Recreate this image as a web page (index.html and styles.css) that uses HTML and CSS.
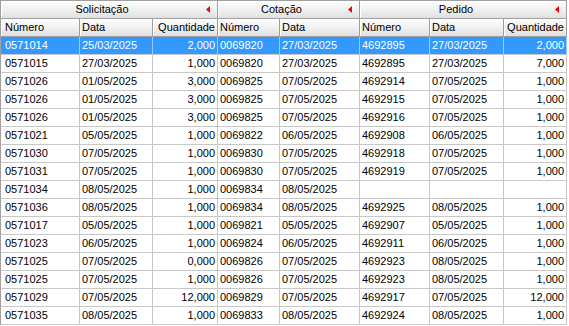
FILE: index.html
```html
<!DOCTYPE html>
<html lang="pt-BR">
<head>
<meta charset="utf-8">
<title>Grade</title>
<link rel="stylesheet" href="styles.css">
</head>
<body>
<div class="grid">
  <div class="h g">Solicitação<svg class="arrow" width="4" height="7" viewBox="0 0 4 7"><polygon points="4,0 0,3.5 4,7" fill="#f00"/></svg></div>
  <div class="h g g2">Cotação<svg class="arrow" width="4" height="7" viewBox="0 0 4 7"><polygon points="4,0 0,3.5 4,7" fill="#f00"/></svg></div>
  <div class="h g">Pedido<svg class="arrow" width="4" height="7" viewBox="0 0 4 7"><polygon points="4,0 0,3.5 4,7" fill="#f00"/></svg></div>

  <div class="h c first">Número</div><div class="h c">Data</div><div class="h c num">Quantidade</div><div class="h c">Número</div><div class="h c">Data</div><div class="h c">Número</div><div class="h c">Data</div><div class="h c num">Quantidade</div>

  <div class="row sel"><div class="c first">0571014</div><div class="c">25/03/2025</div><div class="c num">2,000</div><div class="c">0069820</div><div class="c">27/03/2025</div><div class="c">4692895</div><div class="c">27/03/2025</div><div class="c num">2,000</div></div>
  <div class="row"><div class="c first">0571015</div><div class="c">27/03/2025</div><div class="c num">1,000</div><div class="c">0069820</div><div class="c">27/03/2025</div><div class="c">4692895</div><div class="c">27/03/2025</div><div class="c num">7,000</div></div>
  <div class="row"><div class="c first">0571026</div><div class="c">01/05/2025</div><div class="c num">3,000</div><div class="c">0069825</div><div class="c">07/05/2025</div><div class="c">4692914</div><div class="c">07/05/2025</div><div class="c num">1,000</div></div>
  <div class="row"><div class="c first">0571026</div><div class="c">01/05/2025</div><div class="c num">3,000</div><div class="c">0069825</div><div class="c">07/05/2025</div><div class="c">4692915</div><div class="c">07/05/2025</div><div class="c num">1,000</div></div>
  <div class="row"><div class="c first">0571026</div><div class="c">01/05/2025</div><div class="c num">3,000</div><div class="c">0069825</div><div class="c">07/05/2025</div><div class="c">4692916</div><div class="c">07/05/2025</div><div class="c num">1,000</div></div>
  <div class="row"><div class="c first">0571021</div><div class="c">05/05/2025</div><div class="c num">1,000</div><div class="c">0069822</div><div class="c">06/05/2025</div><div class="c">4692908</div><div class="c">06/05/2025</div><div class="c num">1,000</div></div>
  <div class="row"><div class="c first">0571030</div><div class="c">07/05/2025</div><div class="c num">1,000</div><div class="c">0069830</div><div class="c">07/05/2025</div><div class="c">4692918</div><div class="c">07/05/2025</div><div class="c num">1,000</div></div>
  <div class="row"><div class="c first">0571031</div><div class="c">07/05/2025</div><div class="c num">1,000</div><div class="c">0069830</div><div class="c">07/05/2025</div><div class="c">4692919</div><div class="c">07/05/2025</div><div class="c num">1,000</div></div>
  <div class="row"><div class="c first">0571034</div><div class="c">08/05/2025</div><div class="c num">1,000</div><div class="c">0069834</div><div class="c">08/05/2025</div><div class="c"></div><div class="c"></div><div class="c num"></div></div>
  <div class="row"><div class="c first">0571036</div><div class="c">08/05/2025</div><div class="c num">1,000</div><div class="c">0069834</div><div class="c">08/05/2025</div><div class="c">4692925</div><div class="c">08/05/2025</div><div class="c num">1,000</div></div>
  <div class="row"><div class="c first">0571017</div><div class="c">05/05/2025</div><div class="c num">1,000</div><div class="c">0069821</div><div class="c">05/05/2025</div><div class="c">4692907</div><div class="c">05/05/2025</div><div class="c num">1,000</div></div>
  <div class="row"><div class="c first">0571023</div><div class="c">06/05/2025</div><div class="c num">1,000</div><div class="c">0069824</div><div class="c">06/05/2025</div><div class="c">4692911</div><div class="c">06/05/2025</div><div class="c num">1,000</div></div>
  <div class="row"><div class="c first">0571025</div><div class="c">07/05/2025</div><div class="c num">0,000</div><div class="c">0069826</div><div class="c">07/05/2025</div><div class="c">4692923</div><div class="c">08/05/2025</div><div class="c num">1,000</div></div>
  <div class="row"><div class="c first">0571025</div><div class="c">07/05/2025</div><div class="c num">1,000</div><div class="c">0069826</div><div class="c">07/05/2025</div><div class="c">4692923</div><div class="c">08/05/2025</div><div class="c num">1,000</div></div>
  <div class="row"><div class="c first">0571029</div><div class="c">07/05/2025</div><div class="c num">12,000</div><div class="c">0069829</div><div class="c">07/05/2025</div><div class="c">4692917</div><div class="c">07/05/2025</div><div class="c num">12,000</div></div>
  <div class="row"><div class="c first">0571035</div><div class="c">08/05/2025</div><div class="c num">1,000</div><div class="c">0069833</div><div class="c">08/05/2025</div><div class="c">4692924</div><div class="c">08/05/2025</div><div class="c num">1,000</div></div>
</div>
</body>
</html>
```

FILE: styles.css
```css
html, body {
  margin: 0;
  padding: 0;
  background: #ffffff;
}

body {
  font-family: "Liberation Sans", Arial, sans-serif;
  font-size: 11px;
  color: #000000;
}

.grid {
  display: grid;
  grid-template-columns: 79px 73px 65px 62px 80px 70px 74px 63px;
  grid-auto-rows: 18px;
  width: max-content;
  border-top: 1px solid #a0a0a0;
  border-left: 1px solid #a0a0a0;
}

.row {
  display: contents;
}

.c {
  box-sizing: border-box;
  border-right: 1px solid #c8c8c8;
  border-bottom: 1px solid #c8c8c8;
  line-height: 17px;
  padding: 0 2px;
  white-space: nowrap;
  overflow: hidden;
}

.first {
  padding-left: 4px;
}

.num {
  text-align: right;
}

.h {
  box-sizing: border-box;
  background: linear-gradient(#fdfdfd, #f2f2f2 45%, #e0e0e0);
  border-right: 1px solid #a0a0a0;
  border-bottom: 1px solid #a0a0a0;
  box-shadow: inset 1px 1px 0 #ffffff;
  line-height: 17px;
}

.g {
  grid-column: span 3;
  position: relative;
  text-align: center;
  padding-right: 14px;
  white-space: nowrap;
}

.g2 {
  grid-column: span 2;
}

.arrow {
  position: absolute;
  right: 7px;
  top: 5px;
  display: block;
}

.sel > .c {
  background: #3399ff;
  color: #ffffff;
  border-right-color: #9ccbf7;
}
```
